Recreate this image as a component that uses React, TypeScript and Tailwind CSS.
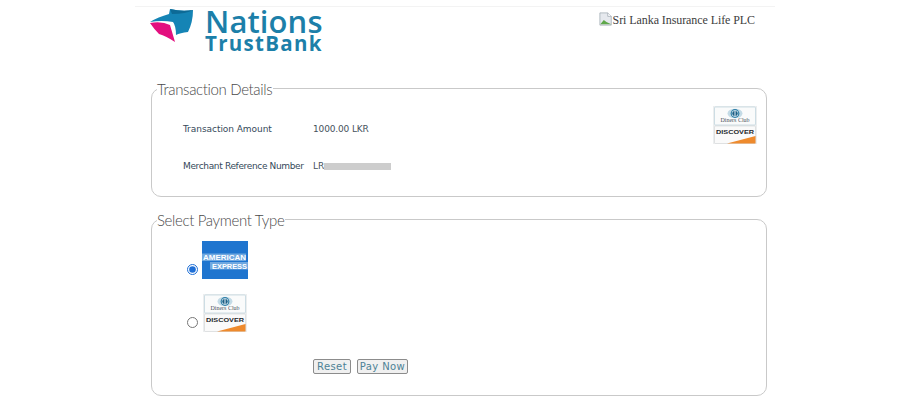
const DinersDiscover = ({ className }: { className: string }) => (
  <svg viewBox="0 0 44 38" className={className}>
    <rect x="0" y="0" width="44" height="38" fill="#eceeef" />
    <rect x="1.500" y="1" width="41" height="18" rx="1" fill="#fafbfb" stroke="#bcd2dc" strokeWidth="0.7" />
    <ellipse cx="22" cy="7.500" rx="7.500" ry="4.800" fill="#c4dbe6" />
    <circle cx="22" cy="7.500" r="4.400" fill="#2f7fa8" />
    <circle cx="22" cy="7.500" r="3.200" fill="#e8f1f5" />
    <path d="M21.500 5v5c-1.500-.3-2.300-1.300-2.300-2.500s.8-2.200 2.300-2.500zM22.500 5v5c1.500-.3 2.300-1.300 2.300-2.500s-.8-2.200-2.300-2.500z" fill="#1d5f86" />
    <text x="22" y="16" textAnchor="middle" fontSize="6" fontFamily="'Liberation Serif', serif" fill="#4b555e">Diners Club</text>
    <rect x="1.500" y="20" width="41" height="17.500" rx="1" fill="#fafafa" stroke="#d5d8da" strokeWidth="0.7" />
    <path d="M14 37.500 42.500 30v7.500z" fill="#ee8a2d" />
    <text x="3" y="27.700" fontSize="5.800" fontWeight="700" fontFamily="'Liberation Sans', sans-serif" fill="#24272b" textLength="38" lengthAdjust="spacingAndGlyphs">DISCOVER</text>
  </svg>
);

const Amex = () => (
  <svg viewBox="0 0 46 38" className="w-[46px] h-[38px] block">
    <rect width="46" height="38" fill="#1f75cf" />
    <rect x="0" y="12.500" width="44" height="7.500" fill="#6fa8e0" />
    <rect x="8" y="21" width="38" height="7.500" fill="#6fa8e0" />
    <text x="1" y="19" fontSize="7.400" fontWeight="700" fontFamily="'Liberation Sans', sans-serif" fill="#fff" textLength="43" lengthAdjust="spacingAndGlyphs">AMERICAN</text>
    <text x="10" y="27.500" fontSize="7.400" fontWeight="700" fontFamily="'Liberation Sans', sans-serif" fill="#fff" textLength="35" lengthAdjust="spacingAndGlyphs">EXPRESS</text>
  </svg>
);

const Logo = () => (
  <div className="flex items-start">
    <svg viewBox="0 0 46 36" className="w-[46px] h-[36px] mt-[1px] ml-[15px] shrink-0">
      <path d="M0 15 Q12 13 20 17 L25 34 Q16 28 9 26 Q4 21 0 15z" fill="#e3107f" />
      <path d="M0 14 Q8 9 19 6 L20 1 Q32 4 43 2 Q43 14 38 24 Q30 25 26 27 Q26 18 23 14 Q12 12 0 14z" fill="#1584b5" />
      <path d="M20 1 Q32 4 43 2 Q36 6 22 6z" fill="#0d6a96" />
    </svg>
    <div className="ml-[9px] font-['Open_Sans',sans-serif] font-semibold text-[#1c7fa9] flex flex-col">
      <span className="text-[31px] leading-[27px] tracking-[0.1px] mt-[1px]">Nations</span>
      <span className="text-[20.500px] leading-[17px] tracking-[1.300px] font-bold">TrustBank</span>
    </div>
  </div>
);

const Box = ({ title, className, children }: { title: string; className: string; children: React.ReactNode }) => (
  <fieldset className={`border border-[#c9c9c9] rounded-[10px] px-[5px] ml-[16px] mr-[8px] ${className}`}>
    <legend className="font-['Lato',sans-serif] font-light text-[15px] leading-[18px] text-[#4a4a4a] tracking-[-0.35px] pr-[1px] translate-y-[1px]">
      {title}
    </legend>
    {children}
  </fieldset>
);

export default function App() {
  const label = "text-[9px] text-[#35495a] font-['DejaVu_Sans',sans-serif]";
  return (
    <div className="w-[920px] h-[406px] bg-white overflow-hidden">
      <div className="w-[640px] ml-[135px] pt-[6px]">
        <div className="border-t border-[#f3f3f3] h-[71px] flex justify-between">
          <Logo />
          <div className="flex items-start mr-[20px] mt-[5px] font-['Liberation_Serif',serif] text-[12px] leading-[16px] text-[#3d3d3d]">
            <svg viewBox="0 0 16 16" className="w-[14px] h-[14px]">
              <path d="M1 1h9l4 4v10H1z" fill="#e6e9ee" stroke="#9aa3ad" strokeWidth="0.8" />
              <path d="M1.500 14l4-5 3 2.500 5.500 2.500z" fill="#5fa84a" />
              <path d="M10 1v4h4" fill="#fff" stroke="#9aa3ad" strokeWidth="0.8" />
            </svg>
            <span className="tracking-[-0.08px]">Sri Lanka Insurance Life PLC</span>
          </div>
        </div>

        <Box title="Transaction Details" className="h-[118px] mt-[2px]">
          <div className="flex justify-between h-full">
            <div className={`grid grid-cols-[130px_1fr] gap-y-[27px] pl-[26px] pt-[27px] content-start ${label}`}>
              <span className="leading-[10px] whitespace-nowrap tracking-[-0.05px]">Transaction Amount</span>
              <span className="leading-[10px] text-[#46525c] tracking-[-0.15px]">1000.00 LKR</span>
              <span className="leading-[10px] whitespace-nowrap tracking-[-0.35px]">Merchant Reference Number</span>
              <span className="leading-[10px] flex items-center text-[#46525c]">
                LR
                <span className="block w-[67px] h-[7px] bg-[#cdcdcd]" />
              </span>
            </div>
            <DinersDiscover className="w-[44px] h-[38px] mt-[9px] mr-[4px]" />
          </div>
        </Box>

        <Box title="Select Payment Type" className="h-[186px] mt-[13px]">
          <div className="pl-[30px] pt-[13px]">
            <label className="flex items-end gap-[4px] h-[38px]">
              <input type="radio" name="pay" defaultChecked className="w-[11px] h-[11px] accent-[#1f6fd6] mb-[4px]" />
              <Amex />
            </label>
            <label className="flex items-end gap-[4px] h-[38px] mt-[15px]">
              <input type="radio" name="pay" className="w-[11px] h-[11px] mb-[4px]" />
              <DinersDiscover className="w-[44px] h-[38px] ml-[1px]" />
            </label>
            <div className="flex gap-[6px] ml-[126px] mt-[27px] font-['DejaVu_Sans',sans-serif] text-[10px] text-[#4d8296] tracking-[0.4px]">
              <button className="w-[38px] h-[15px] leading-[13px] bg-[#f0f0f0] border border-[#8c8c8c] rounded-[2px]">Reset</button>
              <button className="w-[51px] h-[15px] leading-[13px] bg-[#f0f0f0] border border-[#8c8c8c] rounded-[2px]">Pay Now</button>
            </div>
          </div>
        </Box>
      </div>
    </div>
  );
}
